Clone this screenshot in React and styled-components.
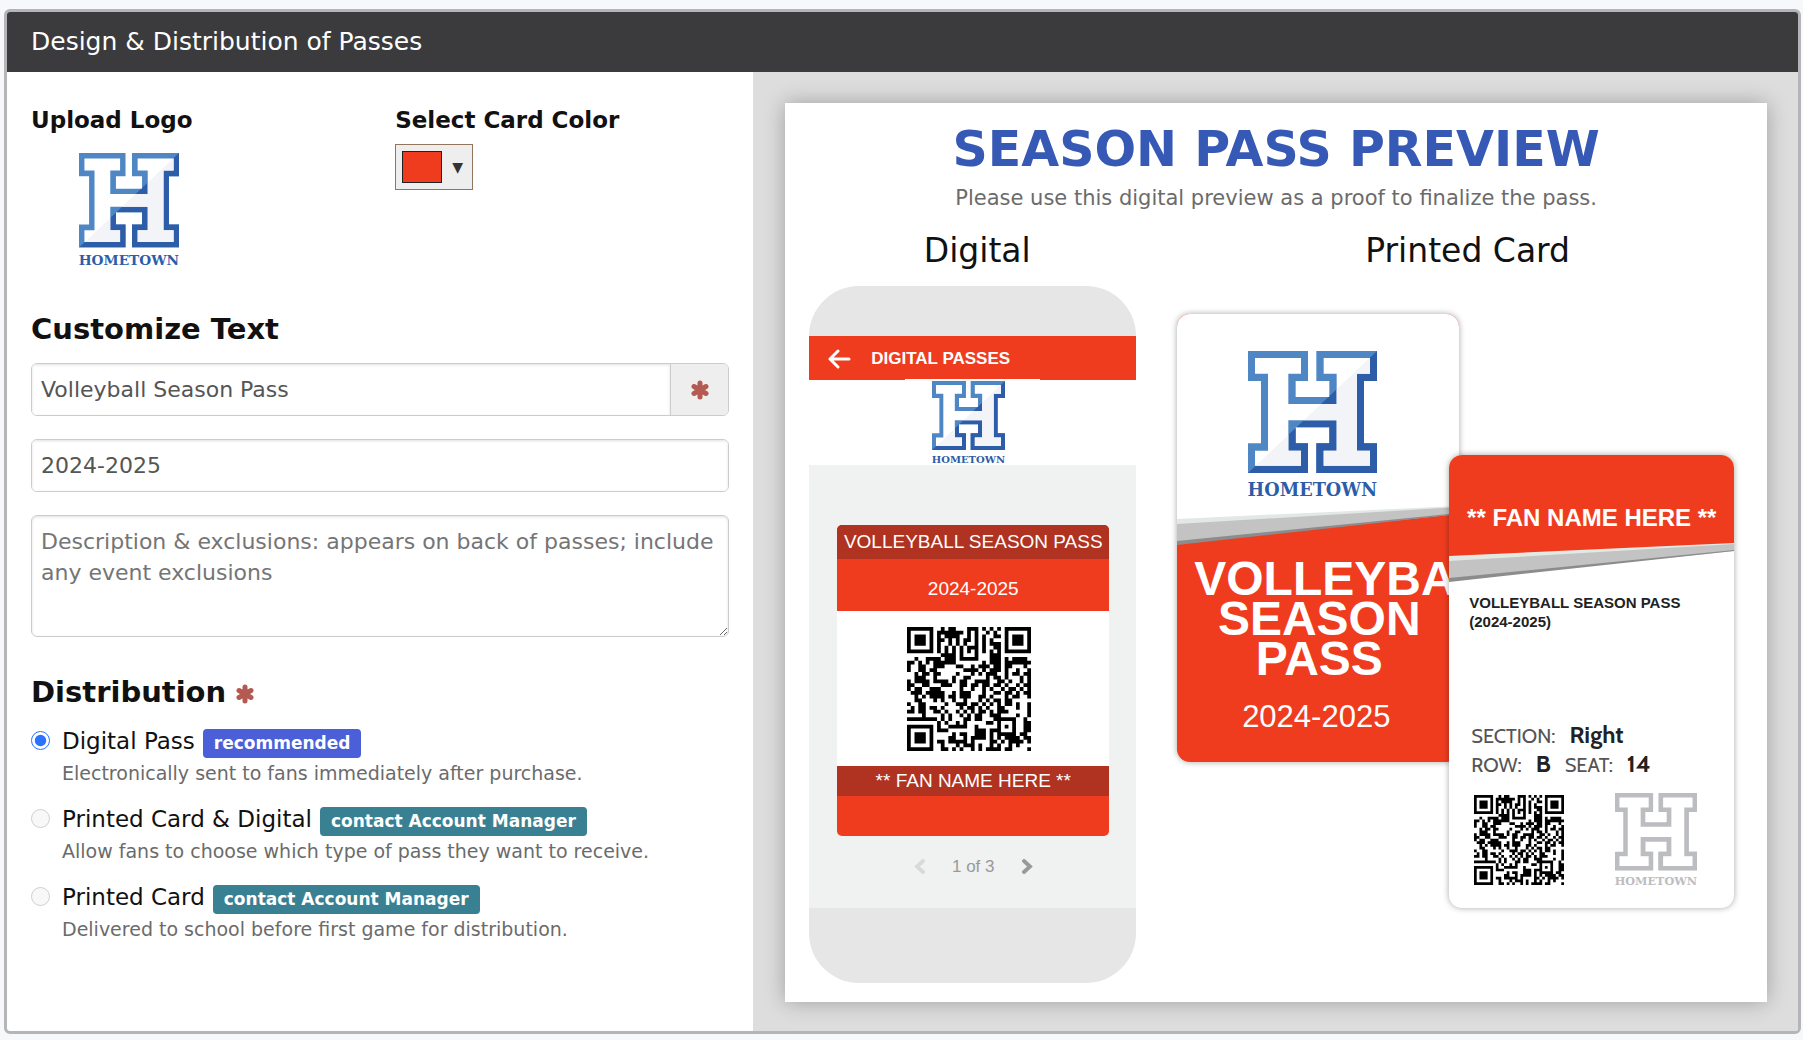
import { useId, useState } from 'react';
import styled, { createGlobalStyle } from 'styled-components';

const GlobalStyle = createGlobalStyle`
    * {
        box-sizing: border-box;
    }
    body {
        margin: 0;
        background: #f7f8fa;
        color: #111;
        font-family: Verdana, 'DejaVu Sans', sans-serif;
    }
    h1, h2, h3, p {
        margin: 0;
    }
    button, input, textarea {
        font-family: inherit;
    }
`;

const PanelStyles = styled.main`
    margin: 9px 2px 5px 4px;
    border: 3px solid #b4b4b9;
    border-radius: 6px;
    background: #fff;
    overflow: hidden;
`;

const PanelHeader = styled.h1`
    padding: 0 24px;
    background: #3b3b3d;
    color: #fff;
    font-size: 25px;
    font-weight: 400;
    line-height: 60px;
`;

const PanelBody = styled.div`
    display: grid;
    grid-template-columns: 5fr 7fr;
`;

const FormColumn = styled.form`
    padding: 34px 24px;
`;

const BrandRow = styled.div`
    display: grid;
    grid-template-columns: 1fr 1fr;
    gap: 30px;
    margin-bottom: 44px;
`;

const FieldTitle = styled.h3`
    margin-bottom: ${(props) => props.$space}px;
    font-size: 23px;
    line-height: 28px;
`;

const UploadedLogo = styled.div`
    padding-left: 48px;
`;

const ColorPicker = styled.button`
    display: flex;
    align-items: center;
    gap: 10px;
    height: 46px;
    padding: 0 9px 0 6px;
    border: 1px solid #91765d;
    background: #eee;
    color: #333;
    font-size: 14px;
    cursor: pointer;
    .swatch {
        width: 40px;
        height: 32px;
        border: 1px solid #222;
        background: #ef3c1f;
    }
`;

const SectionTitle = styled.h2`
    display: flex;
    align-items: center;
    gap: 10px;
    margin-bottom: 16px;
    font-size: 29px;
    line-height: 36px;
    svg {
        margin-top: 4px;
    }
`;

const Fields = styled.div`
    display: grid;
    gap: 23px;
    margin-bottom: 37px;
`;

const InputGroup = styled.div`
    display: flex;
    height: 53px;
    border: 1px solid #ccc;
    border-radius: 6px;
    overflow: hidden;
    .addon {
        display: flex;
        align-items: center;
        justify-content: center;
        width: 58px;
        border-left: 1px solid #ccc;
        background: #eee;
    }
`;

const TextInput = styled.input`
    flex: 1;
    min-width: 0;
    padding: 0 9px;
    border: 0;
    box-shadow: inset 0 1px 3px rgba(0, 0, 0, 0.12);
    color: #555;
    font-size: 22px;
    outline: 0;
`;

const TextArea = styled.textarea`
    display: block;
    width: 100%;
    height: 122px;
    padding: 10px 9px;
    border: 1px solid #ccc;
    border-radius: 6px;
    box-shadow: inset 0 1px 3px rgba(0, 0, 0, 0.12);
    color: #555;
    font-size: 22px;
    line-height: 31px;
    resize: vertical;
    ::placeholder {
        color: #777;
    }
`;

const Options = styled.div`
    display: grid;
    gap: 17px;
`;

const OptionStyles = styled.label`
    display: flex;
    align-items: flex-start;
    gap: 12px;
    input {
        width: 19px;
        height: 19px;
        margin: 5px 0 0;
        accent-color: #2a72ff;
    }
    .name {
        display: flex;
        align-items: baseline;
        gap: 8px;
        height: 33px;
        font-size: 23px;
        line-height: 30px;
    }
    .hint {
        color: #6b6b6b;
        font-size: 19px;
        line-height: 28px;
    }
`;

const Badge = styled.span`
    padding: 0 11px;
    border-radius: 4px;
    background: ${(props) => props.$color};
    color: #fff;
    font-size: 17px;
    font-weight: 700;
    line-height: 29px;
`;

const PreviewColumn = styled.section`
    padding: 31px 31px 29px 32px;
    background: #ddd;
`;

const PreviewSheet = styled.div`
    padding: 17px 0 19px;
    background: #fff;
    box-shadow: 0 0 20px rgba(0, 0, 0, 0.28);
`;

const PreviewTitle = styled.h2`
    color: #3559b5;
    font-size: 49px;
    line-height: 60px;
    text-align: center;
`;

const PreviewNote = styled.p`
    margin-bottom: 15px;
    color: #6b6b6b;
    font-size: 21px;
    line-height: 36px;
    text-align: center;
`;

const PreviewGrid = styled.div`
    display: grid;
    grid-template-columns: 336px 1fr;
    gap: 15px 32px;
    padding: 0 9px 0 24px;
`;

const PreviewHeading = styled.h3`
    font-size: 33px;
    font-weight: 400;
    line-height: 40px;
    text-align: center;
`;

const Phone = styled.div`
    width: 327px;
    padding: 50px 0 75px;
    border-radius: 50px;
    background: #e6e6e6;
    font-family: Arial, 'Liberation Sans', sans-serif;
    overflow: hidden;
`;

const PhoneBar = styled.div`
    display: flex;
    align-items: center;
    gap: 20px;
    height: 44px;
    padding: 2px 19px 0;
    background: #ef3c1f;
    color: #fff;
    font-size: 17px;
    font-weight: 700;
`;

const IconButton = styled.button`
    display: flex;
    padding: 0;
    border: 0;
    background: none;
    color: ${(props) => props.$color};
    cursor: pointer;
`;

const PhoneLogo = styled.div`
    display: flex;
    justify-content: center;
    height: 85px;
    background: #fff;
    .box {
        width: 135px;
        height: 86px;
        margin-top: -1px;
        padding: 2px 35px 0 27px;
        background: #fff;
    }
`;

const PhoneScreen = styled.div`
    padding: 60px 27px 13px 28px;
    background: #f0f2f1;
`;

const DigitalPass = styled.div`
    border-radius: 5px;
    background: #ef3c1f;
    color: #fff;
    font-size: 19px;
    text-align: center;
    white-space: nowrap;
    overflow: hidden;
    .name {
        background: #b03220;
        line-height: 34px;
    }
    .year {
        height: 52px;
        padding-top: 4px;
        line-height: 52px;
    }
    .code {
        display: flex;
        justify-content: center;
        height: 155px;
        padding: 16px 8px 0 0;
        background: #fff;
    }
    .fan {
        margin-bottom: 40px;
        background: #b03220;
        line-height: 30px;
    }
`;

const Pager = styled.div`
    display: flex;
    align-items: center;
    justify-content: center;
    gap: 27px;
    height: 59px;
    padding-top: 2px;
    color: #999;
    font-size: 17px;
`;

const Cards = styled.div`
    display: flex;
    align-items: flex-start;
    padding-top: 28px;
    font-family: Arial, 'Liberation Sans', sans-serif;
`;

const Card = styled.div`
    flex: none;
    border-radius: 13px;
    box-shadow: 0 0 6px rgba(0, 0, 0, 0.35);
    overflow: hidden;
`;

const FrontCard = styled(Card)`
    width: 282px;
    height: 448px;
    background: #ef3c1f;
    color: #fff;
    text-align: center;
    .art {
        display: flex;
        align-items: flex-start;
        justify-content: center;
        height: 192px;
        padding: 37px 11px 0 0;
        background: #fff;
    }
    .name {
        padding: 14px 15px 0 17px;
        font-size: 48px;
        font-weight: 700;
        line-height: 40px;
    }
    .year {
        margin-top: 18px;
        padding-right: 4px;
        font-size: 31px;
        line-height: 40px;
    }
`;

// lies over the right edge of the front card
const BackCard = styled(Card)`
    position: relative;
    width: 285px;
    height: 453px;
    margin: 141px 0 0 -10px;
    background: #fff;
    color: #222;
    .fan {
        height: 88px;
        padding-top: 48px;
        background: #ef3c1f;
        color: #fff;
        font-size: 24px;
        font-weight: 700;
        line-height: 30px;
        text-align: center;
        white-space: nowrap;
    }
    .name {
        height: 127px;
        padding: 11px 20px 0;
        font-size: 15px;
        font-weight: 700;
        line-height: 19px;
    }
    .codes {
        display: flex;
        align-items: center;
        justify-content: space-between;
        padding: 15px 37px 0 25px;
    }
`;

const SeatInfo = styled.dl`
    margin: 11px 0 0;
    padding-left: 22px;
    font-family: Cabin, Lato, sans-serif;
    line-height: 29px;
    div {
        display: flex;
        align-items: baseline;
        height: 29px;
    }
    dt {
        color: #555;
        font-size: 20px;
    }
    dd {
        margin: 0 14px;
        font-size: 24px;
        font-weight: 700;
    }
`;

const LogoStyles = styled.svg`
    display: block;
    flex: none;
    width: ${(props) => props.$width}px;
    height: auto;
`;

const OUTER_H =
    'M0 0H180V90H143V138H244V90H205V0H387V90H348V277H387V366H205V277H244V229H143V277H180V366H0V277H39V90H0Z';
const INNER_H =
    'M21 21H159V68H121V159H266V68H227V21H366V68H327V299H366V344H227V299H266V208H121V299H159V344H21V299H60V68H21Z';

function Logo({ width, mono }) {
    const id = useId();
    const ink = mono ? '#bcbdc0' : '#4f87c5';
    const shade = mono ? '#bcbdc0' : '#2d5ca8';

    return (
        <LogoStyles $width={width} viewBox="0 0 387 442">
            {/* lower right half of the letter is shaded */}
            <clipPath id={id}>
                <path d="M0 366L387 0V366Z" />
            </clipPath>
            <path d={OUTER_H} fill={ink} />
            <path d={OUTER_H} fill={shade} clipPath={`url(#${id})`} />
            <path d={INNER_H} fill="#fff" />
            {!mono && (
                <path d={INNER_H} fill="#f3f4f7" clipPath={`url(#${id})`} />
            )}
            <text
                x="193"
                y="434"
                textAnchor="middle"
                fontFamily="DejaVu Serif, serif"
                fontWeight="700"
                fontSize="53"
                fill={shade}
            >
                HOMETOWN
            </text>
        </LogoStyles>
    );
}

const QR_ROWS = [
    'XXXXXXX..X.XX...XXX.X.X.X.XXXXXXX',
    'X.....X.XXXXXXX.X.X..X.X..X.....X',
    'X.XXX.X.X.XXXX..X.X.X..XX.X.XXX.X',
    'X.XXX.X.XX.X.X.XX.X.X.X...X.XXX.X',
    'X.XXX.X.X..X.X.X..X.X.XXX.X.XXX.X',
    'X.....X.X.X.X.X.XXX.X..XX.X.....X',
    'XXXXXXX.X.X.X.X.X.X.X.X.X.XXXXXXX',
    '.........XXXX.X...X...XXX........',
    '..X..XXXX.XXX.XXXXX...XXX.X.XXXX.',
    'XX.X.X.XXXXXX.......X.XXX.XXXXXXX',
    'X..XX..XXX...XX..X.XXX.XX.XX...X.',
    'X..XX.XX.......XXXX.X.XXX.X..X..X',
    '..X.XX.XX....X...X.X.XXX..X.XX.XX',
    '..XXX..X....X..XX....X.XX.X...X.X',
    'X.XXXX.XXXX.X.XX..XXXX..XX.X..X.X',
    'XX..XX...XXX..XX.XX.XX.XX.X..X.XX',
    'X.XX..XXX.....X..X..X.X..X.XX.X.X',
    '.XXX.XXXXX..X.XXX...X..XX.XX.X.XX',
    '..X.X.XXXX.XX.XXX..XX.X...X.XX..X',
    '..XX...X.X..X..X...X.X.XX.XX.....',
    'X..XX.....X..XXX.XX.X.X.X.XX.X..X',
    '.X.XX.XX.X....X.XX.X.X..XX...X..X',
    'XX.XX..XX.X..X.X.X.XX.X.XXX.....X',
    '....X....X.X..X.X.XX..XXX....X..X',
    'XXXXXXXX.X.X...XX.XX...XXXXXX..X.',
    '........X.X..X.X.....XX.X...X..XX',
    'XXXXXXX.X..XXXXX..X.....X.X.X..XX',
    'X.....X.XXX.......XXX.XXX...X..XX',
    'X.XXX.X.....X.XX..XXX.X.XXXXX.XX.',
    'X.XXX.X....XX..X.XXXX.X.X.XXXX.XX',
    'X.XXX.X.XX.XXXXX.X....XX.X.XXXX.X',
    'X.....X..X...X.XXX.X..X.X..X.X...',
    'XXXXXXX..XX.X.X..X.X.XXXX.XX....X',
];

const QR_PATH = QR_ROWS.flatMap((row, y) =>
    [...row].map((cell, x) => (cell === 'X' ? `M${x} ${y}h1v1h-1z` : ''))
).join('');

function QrCode({ size }) {
    return (
        <svg width={size} height={size} viewBox="0 0 33 33">
            <path d={QR_PATH} />
        </svg>
    );
}

function Asterisk() {
    return (
        <svg width="18" height="20" viewBox="0 0 18 20">
            <path
                d="M9 3V17M3 6.5L15 13.5M15 6.5L3 13.5"
                stroke="#b45a52"
                strokeWidth="5"
                strokeLinecap="round"
            />
        </svg>
    );
}

function Chevron({ flip }) {
    return (
        <svg width="11" height="15" viewBox="0 0 11 15" fill="none">
            <path
                d={flip ? 'M9 2L3 7.5L9 13' : 'M2 2L8 7.5L2 13'}
                stroke="currentColor"
                strokeWidth="3.8"
                strokeLinecap="round"
            />
        </svg>
    );
}

// grey band that splits the two halves of a printed card
function Ribbon({ above, below }) {
    return (
        <svg
            width="100%"
            height="39"
            viewBox="0 0 285 39"
            preserveAspectRatio="none"
            display="block"
        >
            <path d="M0 0H285V39H0Z" fill={above} />
            <path d="M0 36L285 7V39H0Z" fill={below} />
            <path d="M0 13L285 0V2L0 20Z" fill="#e2e8e4" />
            <path d="M0 18L285 1V8L0 37Z" fill="#c3c3c3" />
            <path d="M0 35L285 7V8L0 39Z" fill="#8c8c8c" />
        </svg>
    );
}

const options = [
    {
        id: 'digital',
        name: 'Digital Pass',
        badge: 'recommended',
        color: '#4b5fd9',
        hint: 'Electronically sent to fans immediately after purchase.',
    },
    {
        id: 'both',
        name: 'Printed Card & Digital',
        badge: 'contact Account Manager',
        color: '#398093',
        hint: 'Allow fans to choose which type of pass they want to receive.',
        disabled: true,
    },
    {
        id: 'printed',
        name: 'Printed Card',
        badge: 'contact Account Manager',
        color: '#398093',
        hint: 'Delivered to school before first game for distribution.',
        disabled: true,
    },
];

export default function App() {
    const [name, setName] = useState('Volleyball Season Pass');
    const [year, setYear] = useState('2024-2025');
    const [description, setDescription] = useState('');
    const [method, setMethod] = useState('digital');

    const passName = name.toUpperCase();

    return (
        <>
            <GlobalStyle />
            <PanelStyles>
                <PanelHeader>Design &amp; Distribution of Passes</PanelHeader>
                <PanelBody>
                    <FormColumn onSubmit={(e) => e.preventDefault()}>
                        <BrandRow>
                            <div>
                                <FieldTitle $space={19}>Upload Logo</FieldTitle>
                                <UploadedLogo>
                                    <Logo width={100} />
                                </UploadedLogo>
                            </div>
                            <div>
                                <FieldTitle $space={10}>
                                    Select Card Color
                                </FieldTitle>
                                <ColorPicker
                                    type="button"
                                    aria-label="Select Card Color"
                                >
                                    <span className="swatch" />▼
                                </ColorPicker>
                            </div>
                        </BrandRow>

                        <SectionTitle>Customize Text</SectionTitle>
                        <Fields>
                            <InputGroup>
                                <TextInput
                                    aria-label="Pass name"
                                    value={name}
                                    onChange={(e) => setName(e.target.value)}
                                />
                                <span className="addon">
                                    <Asterisk />
                                </span>
                            </InputGroup>
                            <InputGroup>
                                <TextInput
                                    aria-label="Season"
                                    value={year}
                                    onChange={(e) => setYear(e.target.value)}
                                />
                            </InputGroup>
                            <TextArea
                                aria-label="Description"
                                placeholder="Description & exclusions: appears on back of passes; include any event exclusions"
                                value={description}
                                onChange={(e) => setDescription(e.target.value)}
                            />
                        </Fields>

                        <SectionTitle>
                            Distribution <Asterisk />
                        </SectionTitle>
                        <Options>
                            {options.map((option) => (
                                <OptionStyles key={option.id}>
                                    <input
                                        type="radio"
                                        name="method"
                                        checked={method === option.id}
                                        disabled={option.disabled}
                                        onChange={() => setMethod(option.id)}
                                    />
                                    <div>
                                        <div className="name">
                                            {option.name}
                                            <Badge $color={option.color}>
                                                {option.badge}
                                            </Badge>
                                        </div>
                                        <div className="hint">
                                            {option.hint}
                                        </div>
                                    </div>
                                </OptionStyles>
                            ))}
                        </Options>
                    </FormColumn>

                    <PreviewColumn>
                        <PreviewSheet>
                            <PreviewTitle>SEASON PASS PREVIEW</PreviewTitle>
                            <PreviewNote>
                                Please use this digital preview as a proof to
                                finalize the pass.
                            </PreviewNote>
                            <PreviewGrid>
                                <PreviewHeading>Digital</PreviewHeading>
                                <PreviewHeading>Printed Card</PreviewHeading>
                                <Phone>
                                    <PhoneBar>
                                        <IconButton
                                            $color="#fff"
                                            aria-label="Back"
                                        >
                                            <svg
                                                width="23"
                                                height="20"
                                                viewBox="0 0 23 20"
                                                fill="none"
                                                stroke="currentColor"
                                                strokeWidth="3"
                                                strokeLinecap="round"
                                                strokeLinejoin="round"
                                            >
                                                <path d="M10 2L2 10L10 18M2 10H21" />
                                            </svg>
                                        </IconButton>
                                        DIGITAL PASSES
                                    </PhoneBar>
                                    <PhoneLogo>
                                        <div className="box">
                                            <Logo width={73} />
                                        </div>
                                    </PhoneLogo>
                                    <PhoneScreen>
                                        <DigitalPass>
                                            <div className="name">
                                                {passName}
                                            </div>
                                            <div className="year">{year}</div>
                                            <div className="code">
                                                <QrCode size={124} />
                                            </div>
                                            <div className="fan">
                                                ** FAN NAME HERE **
                                            </div>
                                        </DigitalPass>
                                        <Pager>
                                            <IconButton
                                                $color="#d8d9d9"
                                                aria-label="Previous pass"
                                            >
                                                <Chevron flip />
                                            </IconButton>
                                            1 of 3
                                            <IconButton
                                                $color="#999"
                                                aria-label="Next pass"
                                            >
                                                <Chevron />
                                            </IconButton>
                                        </Pager>
                                    </PhoneScreen>
                                </Phone>
                                <Cards>
                                    <FrontCard>
                                        <div className="art">
                                            <Logo width={129} />
                                        </div>
                                        <Ribbon above="#fff" below="#ef3c1f" />
                                        <div className="name">{passName}</div>
                                        <div className="year">{year}</div>
                                    </FrontCard>
                                    <BackCard>
                                        <div className="fan">
                                            ** FAN NAME HERE **
                                        </div>
                                        <Ribbon above="#ef3c1f" below="#fff" />
                                        <div className="name">
                                            {passName}
                                            <br />({year})
                                        </div>
                                        <SeatInfo>
                                            <div>
                                                <dt>SECTION:</dt>
                                                <dd>Right</dd>
                                            </div>
                                            <div>
                                                <dt>ROW:</dt>
                                                <dd>B</dd>
                                                <dt>SEAT:</dt>
                                                <dd>14</dd>
                                            </div>
                                        </SeatInfo>
                                        <div className="codes">
                                            <QrCode size={90} />
                                            <Logo width={82} mono />
                                        </div>
                                    </BackCard>
                                </Cards>
                            </PreviewGrid>
                        </PreviewSheet>
                    </PreviewColumn>
                </PanelBody>
            </PanelStyles>
        </>
    );
}
